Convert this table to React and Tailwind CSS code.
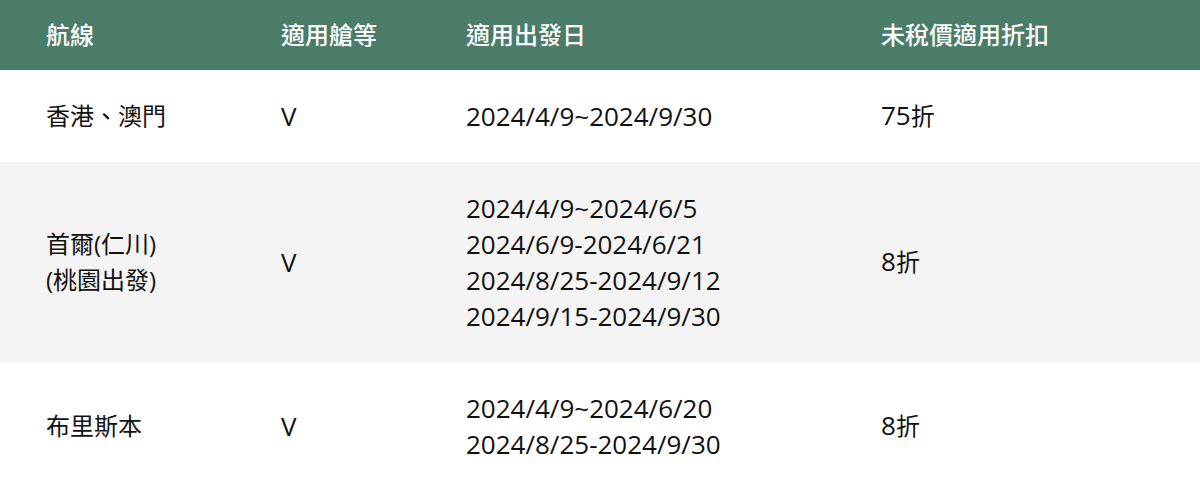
export default function App() {
  const L = (t) => <span className="text-[26px] leading-none">{t}</span>;
  const rows = [
    { route: [<>香港、澳門</>], cls: "V", dates: ["2024/4/9~2024/9/30"], disc: <>{L("75")}折</>, bg: "bg-white" },
    {
      route: [<>首爾(仁川)</>, <>(桃園出發)</>],
      cls: "V",
      dates: ["2024/4/9~2024/6/5", "2024/6/9-2024/6/21", "2024/8/25-2024/9/12", "2024/9/15-2024/9/30"],
      disc: <>{L("8")}折</>,
      bg: "bg-[#f4f4f4]",
    },
    { route: [<>布里斯本</>], cls: "V", dates: ["2024/4/9~2024/6/20", "2024/8/25-2024/9/30"], disc: <>{L("8")}折</>, bg: "bg-white" },
  ];
  const cols = "grid grid-cols-[235px_185px_415px_365px]";
  return (
    <div
      className="w-[1200px] h-[492px] overflow-hidden bg-white text-[24px] leading-[36px] text-[#111]"
      style={{ fontFamily: '"Open Sans", "Noto Sans CJK TC", sans-serif' }}
    >
      <div className={`${cols} h-[70px] bg-[#4a7c68] text-white items-center`}>
        {["航線", "適用艙等", "適用出發日", "未稅價適用折扣"].map((h) => (
          <div key={h} className="pl-[46px] font-medium pb-[1px]">{h}</div>
        ))}
      </div>
      {rows.map((r, i) => (
        <div key={i} className={`${cols} ${r.bg} py-[28px] items-center`}>
          <div className="pl-[46px]">
            {r.route.map((t, j) => (
              <div key={j} className="h-[36px]">{t}</div>
            ))}
          </div>
          <div className="pl-[46px] text-[26px] h-[36px]">{r.cls}</div>
          <div className="pl-[46px] text-[26px]">
            {r.dates.map((t) => (
              <div key={t} className="h-[36px] leading-[36px]">{t}</div>
            ))}
          </div>
          <div className="pl-[46px] h-[36px]">{r.disc}</div>
        </div>
      ))}
    </div>
  );
}
